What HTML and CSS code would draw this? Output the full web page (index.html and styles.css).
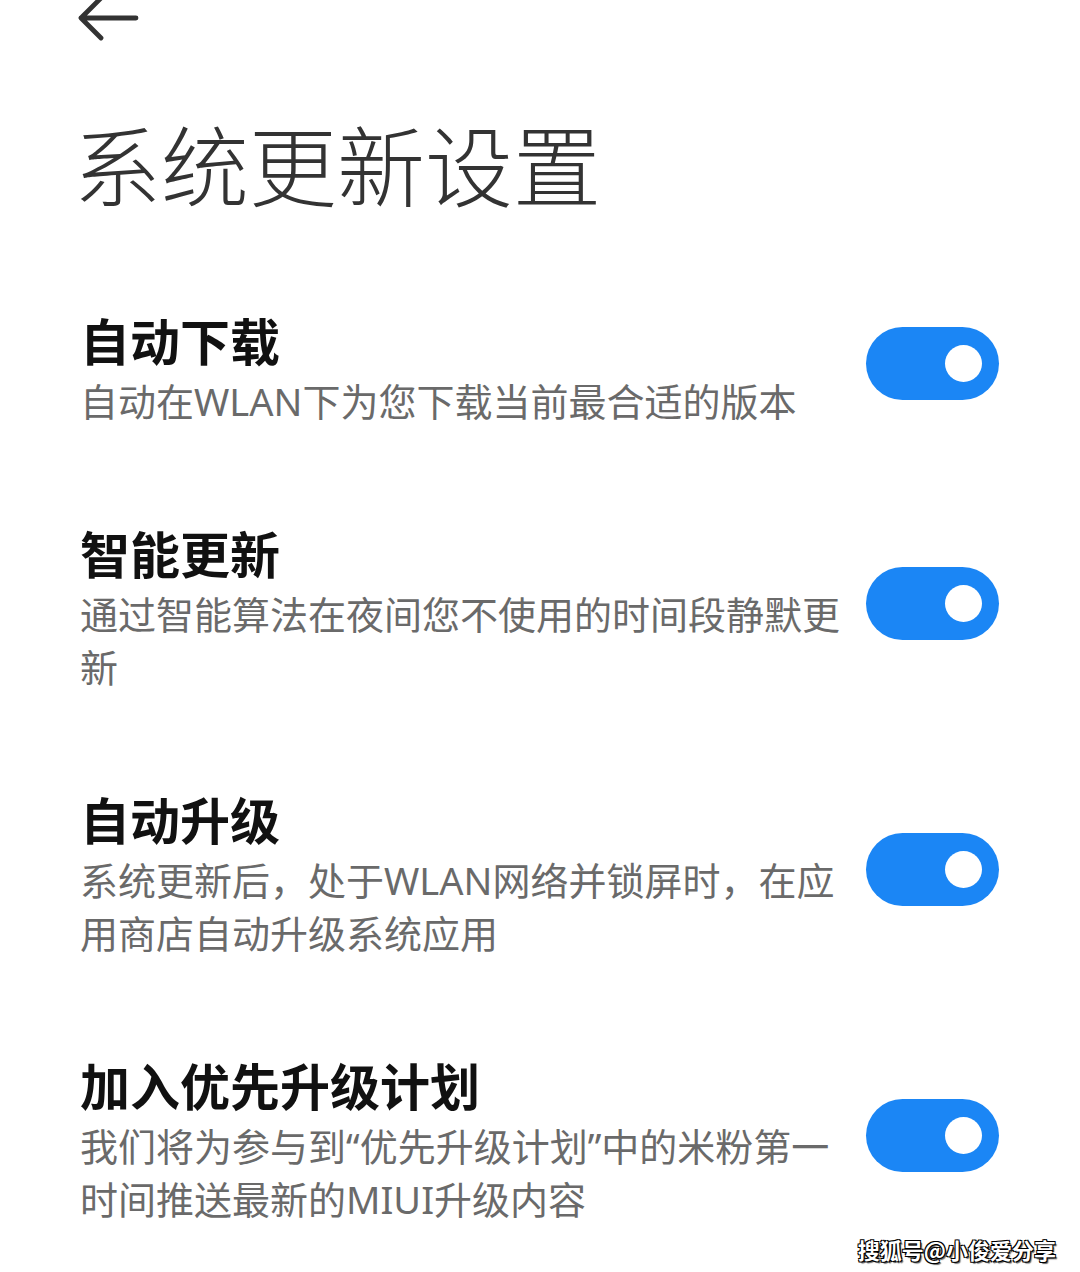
FILE: index.html
```html
<!DOCTYPE html>
<html lang="zh-CN">
<head>
<meta charset="utf-8">
<title>系统更新设置</title>
<link rel="stylesheet" href="styles.css">
</head>
<body>
<div class="page">
  <header class="topbar">
    <svg class="back" width="62" height="42" viewBox="0 0 62 42" aria-label="返回">
      <path d="M4 19 H59 M24 -1 L4 19 L24 39" fill="none" stroke="#333" stroke-width="4.8" stroke-linecap="round" stroke-linejoin="round"/>
    </svg>
  </header>
  <h1 class="title">系统更新设置</h1>
  <ul class="list">
    <li class="item">
      <div class="text">
        <div class="item-title">自动下载</div>
        <div class="item-desc">自动在WLAN下为您下载当前最合适的版本</div>
      </div>
      <div class="toggle"><span class="knob"></span></div>
    </li>
    <li class="item">
      <div class="text">
        <div class="item-title">智能更新</div>
        <div class="item-desc">通过智能算法在夜间您不使用的时间段静默更新</div>
      </div>
      <div class="toggle"><span class="knob"></span></div>
    </li>
    <li class="item">
      <div class="text">
        <div class="item-title">自动升级</div>
        <div class="item-desc">系统更新后，处于WLAN网络并锁屏时，在应用商店自动升级系统应用</div>
      </div>
      <div class="toggle"><span class="knob"></span></div>
    </li>
    <li class="item">
      <div class="text">
        <div class="item-title">加入优先升级计划</div>
        <div class="item-desc">我们将为参与到“优先升级计划”中的米粉第一时间推送最新的MIUI升级内容</div>
      </div>
      <div class="toggle"><span class="knob"></span></div>
    </li>
  </ul>
  <div class="watermark">搜狐号@小俊爱分享</div>
</div>
</body>
</html>
```
FILE: styles.css
```css
html, body {
  margin: 0;
  padding: 0;
  background: #ffffff;
}
body {
  font-family: "Noto Sans", "Noto Sans CJK SC", sans-serif;
}
.page {
  position: relative;
  width: 1080px;
  height: 1272px;
  overflow: hidden;
  box-sizing: border-box;
  padding: 0 81px 0 80px;
}
.topbar {
  height: 40px;
  display: flex;
  align-items: flex-start;
}
.back {
  display: block;
  margin-left: -3px;
  margin-top: -1px;
}
.title {
  margin: 72px 0 0 -7px;
  font-family: "Noto Sans CJK SC", sans-serif;
  font-size: 88px;
  line-height: 100px;
  font-weight: 300;
  color: #333333;
  letter-spacing: 0;
}
.list {
  list-style: none;
  margin: 97px 0 0 0;
  padding: 0;
  display: flex;
  flex-direction: column;
  gap: 94px;
}
.item {
  display: flex;
  justify-content: space-between;
  align-items: center;
}
.text {
  flex: 0 0 770px;
  width: 770px;
}
.item-title {
  font-family: "Noto Sans CJK SC", sans-serif;
  font-size: 50px;
  line-height: 60px;
  font-weight: 700;
  color: #111111;
}
.item-desc {
  margin-top: 6px;
  font-size: 38px;
  line-height: 53px;
  color: #6a6a6a;
}
.toggle {
  flex: 0 0 auto;
  width: 133px;
  height: 73px;
  border-radius: 37px;
  background: #1b86f5;
  display: flex;
  align-items: center;
  justify-content: flex-end;
  padding-right: 17px;
  box-sizing: border-box;
  margin-bottom: 10px;
}
.knob {
  width: 37px;
  height: 37px;
  border-radius: 50%;
  background: #ffffff;
}
.watermark {
  position: absolute;
  right: 24px;
  bottom: 8px;
  font-family: "Noto Sans CJK SC", sans-serif;
  font-size: 22px;
  line-height: 30px;
  font-weight: 700;
  color: #ffffff;
  text-shadow: 1px 1px 0 #000, -1px 1px 0 #000, 1px -1px 0 #000, -1px -1px 0 #000, 2px 2px 1px rgba(0,0,0,0.6);
}
```
